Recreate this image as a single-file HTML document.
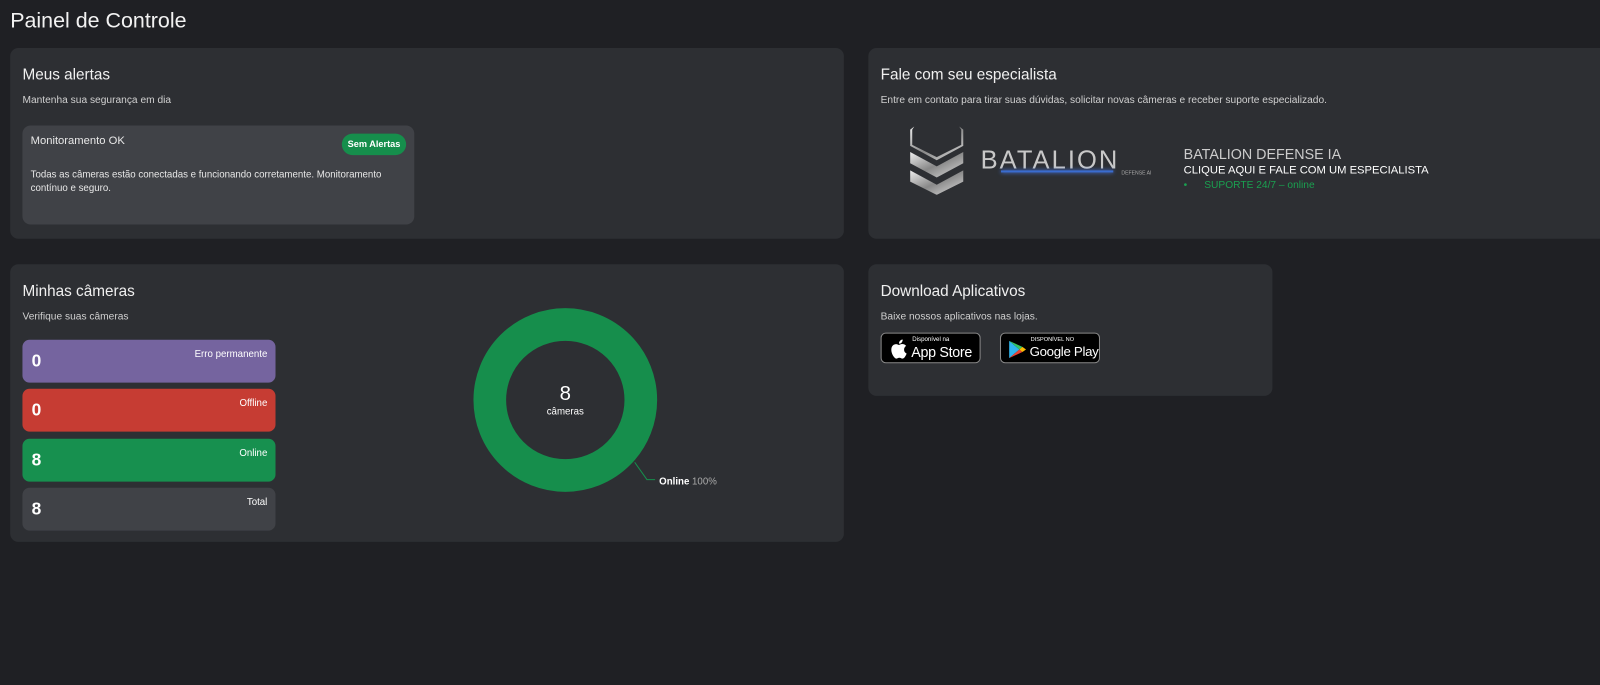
<!DOCTYPE html>
<html><head><meta charset="utf-8"><style>
*{box-sizing:border-box;margin:0;padding:0}
body{width:1600px;height:685px;background:#1f2024;font-family:"Liberation Sans","DejaVu Sans",sans-serif;color:#e8e8e8;position:relative;overflow:hidden}
#w{position:absolute;left:0;top:0;width:1568px;height:671px;transform:scale(1.0204);transform-origin:0 0}
.abs{position:absolute;white-space:nowrap}
.card{position:absolute;background:#2d2f33;border-radius:8px}
h2{font-size:15px;font-weight:normal;color:#f0f0f0;position:absolute}
.sub{font-size:10px;color:#d0d0d0;position:absolute;white-space:nowrap}
.stat{position:absolute;left:12px;width:248px;height:42px;border-radius:7px}
.stat b{position:absolute;left:9px;top:11px;font-size:17px;color:#fff}
.stat span{position:absolute;right:8px;top:9px;font-size:9.5px;color:#fff}
.badge{background:#000;border:1px solid #888;border-radius:5px;position:absolute;height:30px;color:#fff}
</style></head><body><div id="w">
<div class="abs" style="left:10px;top:9px;font-size:21px;color:#f2f2f2">Painel de Controle</div>

<div class="card" style="left:10px;top:47px;width:817px;height:187px">
<h2 style="left:12px;top:18px">Meus alertas</h2>
<div class="sub" style="left:12px;top:46px">Mantenha sua segurança em dia</div>
<div class="abs" style="left:12px;top:76px;width:384px;height:97px;background:#404247;border-radius:8px">
<div class="abs" style="left:8px;top:9px;font-size:11px">Monitoramento OK</div>
<div class="abs" style="left:313px;top:8px;width:63px;height:21px;background:#168e4c;border-radius:11px;font-size:9px;font-weight:bold;color:#fff;text-align:center;line-height:21px">Sem Alertas</div>
<div style="position:absolute;left:8px;top:42px;width:362px;font-size:9.5px;line-height:13px;white-space:normal">Todas as câmeras estão conectadas e funcionando corretamente. Monitoramento contínuo e seguro.</div>
</div>
</div>

<div class="card" style="left:851px;top:47px;width:760px;height:187px">
<h2 style="left:12px;top:18px">Fale com seu especialista</h2>
<div class="sub" style="left:12px;top:46px">Entre em contato para tirar suas dúvidas, solicitar novas câmeras e receber suporte especializado.</div>
<svg class="abs" style="left:39px;top:76px" width="56" height="68" viewBox="0 0 56 68">
<defs><linearGradient id="g" x1="0" y1="0" x2="1" y2="1"><stop offset="0" stop-color="#eee"/><stop offset=".5" stop-color="#888"/><stop offset="1" stop-color="#ddd"/></linearGradient></defs>
<path d="M6 1 L2 4 L2 20 L28 34 L54 20 L54 4 L50 1 L52 4 L52 19 L28 31 L4 19 L4 4Z" fill="url(#g)"/>
<path d="M2 26 L28 40 L54 26 L54 37 L28 51 L2 37Z" fill="url(#g)"/>
<path d="M2 44 L28 58 L54 44 L54 55 L28 68 L2 55Z" fill="url(#g)"/>
</svg>
<div class="abs" style="left:110px;top:96px;font-size:25px;letter-spacing:2px;color:#c8c8c8">BATALION</div>
<div class="abs" style="left:130px;top:120px;width:110px;height:2px;background:#3a6ccf;box-shadow:0 0 4px #4a80ff"></div>
<div class="abs" style="left:248px;top:120px;font-size:5px;color:#aaa">DEFENSE AI</div>
<div class="abs" style="left:309px;top:96px;font-size:14px;color:#ccc">BATALION DEFENSE IA</div>
<div class="abs" style="left:309px;top:114px;font-size:11px;color:#fff">CLIQUE AQUI E FALE COM UM ESPECIALISTA</div>
<div class="abs" style="left:309px;top:129px;font-size:10px;color:#1aa050">•&nbsp;&nbsp;&nbsp;&nbsp;&nbsp;&nbsp;SUPORTE 24/7 – online</div>
</div>

<div class="card" style="left:10px;top:259px;width:817px;height:272px">
<h2 style="left:12px;top:18px">Minhas câmeras</h2>
<div class="sub" style="left:12px;top:46px">Verifique suas câmeras</div>
<div class="stat" style="top:74px;background:#75649f"><b>0</b><span>Erro permanente</span></div>
<div class="stat" style="top:122px;background:#c63c33"><b>0</b><span>Offline</span></div>
<div class="stat" style="top:171px;background:#17904f"><b>8</b><span>Online</span></div>
<div class="stat" style="top:219px;background:#404247"><b>8</b><span>Total</span></div>
<svg class="abs" style="left:440px;top:30px" width="300" height="200">
<circle cx="104" cy="103" r="74" fill="none" stroke="#168e4c" stroke-width="32"/>
<path d="M172 164 L184 181 L192 181" stroke="#168e4c" fill="none"/>
</svg>
<div class="abs" style="left:494px;top:116px;width:100px;text-align:center;font-size:20px;color:#fff">8</div>
<div class="abs" style="left:494px;top:139px;width:100px;text-align:center;font-size:9.5px;color:#fff">câmeras</div>
<div class="abs" style="left:636px;top:208px;font-size:9.5px;color:#fff"><b>Online</b> <span style="color:#aaa">100%</span></div>
</div>

<div class="card" style="left:851px;top:259px;width:396px;height:129px">
<h2 style="left:12px;top:18px">Download Aplicativos</h2>
<div class="sub" style="left:12px;top:46px">Baixe nossos aplicativos nas lojas.</div>
<div class="badge" style="left:12px;top:67px;width:98px">
<svg class="abs" style="left:8px;top:5px" width="17" height="20" viewBox="0 0 17 20"><path d="M14 10.6c0-2.4 2-3.5 2-3.6-1.1-1.6-2.8-1.8-3.4-1.8-1.4-.2-2.8.8-3.5.8-.7 0-1.9-.8-3-.8C4.500 5.300 3 6 2.300 7.500c-1.700 2.900-.4 7.200 1.200 9.500.8 1.100 1.700 2.400 2.900 2.400 1.200 0 1.600-.8 3-.8s1.800.8 3 .8c1.300 0 2.100-1.200 2.800-2.300.9-1.300 1.300-2.600 1.300-2.700-.1 0-2.500-.9-2.500-3.800zM11.700 3.600c.6-.8 1.100-1.800.9-2.900-.9 0-2 .6-2.600 1.400-.6.600-1.100 1.700-.9 2.700 1 .1 2-.5 2.600-1.200z" fill="#fff"/></svg>
<div class="abs" style="left:30px;top:3px;font-size:6px">Disponível na</div>
<div class="abs" style="left:29px;top:10px;font-size:14px;letter-spacing:-.3px">App Store</div>
</div>
<div class="badge" style="left:129px;top:67px;width:98px">
<svg class="abs" style="left:7px;top:6px" width="18" height="19" viewBox="0 0 18 19"><path d="M1 1 L11 9.5 L1 18Z" fill="#2fb6f0"/><path d="M1 1 L14 7 L11 9.5Z" fill="#34c466"/><path d="M1 18 L14 12 L11 9.5Z" fill="#ea4335"/><path d="M14 7 L17.500 9.500 L14 12 L11 9.5Z" fill="#fbbc04"/></svg>
<div class="abs" style="left:29px;top:3px;font-size:5.5px">DISPONÍVEL NO</div>
<div class="abs" style="left:28px;top:10px;font-size:13px;letter-spacing:-.3px">Google Play</div>
</div>
</div>
</div></body></html>
